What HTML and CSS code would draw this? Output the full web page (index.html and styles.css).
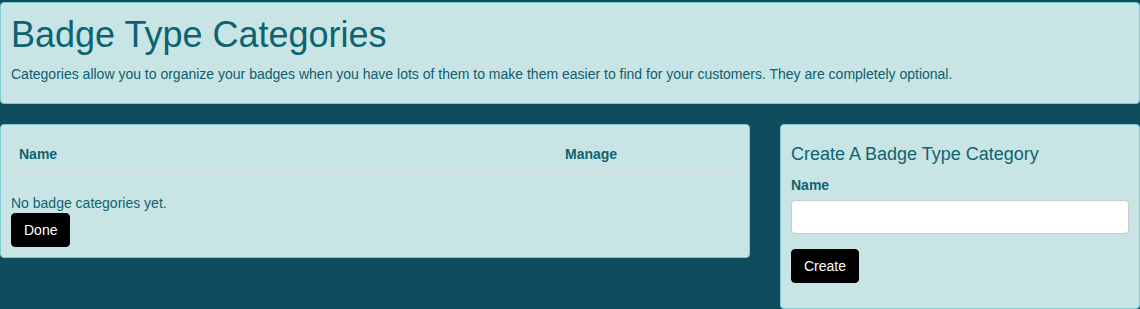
FILE: index.html
```html
<!DOCTYPE html>
<html>
<head>
<meta charset="utf-8">
<link rel="stylesheet" href="styles.css">
</head>
<body>
<div class="page">
  <section class="panel intro">
    <h1 class="title">Badge Type Categories</h1>
    <p class="lead">Categories allow you to organize your badges when you have lots of them to make them easier to find for your customers. They are completely optional.</p>
  </section>
  <div class="columns">
    <section class="panel list">
      <table class="table">
        <thead>
          <tr><th class="col-name">Name</th><th class="col-manage">Manage</th></tr>
        </thead>
      </table>
      <p class="empty">No badge categories yet.</p>
      <button class="btn">Done</button>
    </section>
    <section class="panel create">
      <h3 class="subtitle">Create A Badge Type Category</h3>
      <label class="label" for="name">Name</label>
      <input class="input" id="name" type="text">
      <button class="btn">Create</button>
    </section>
  </div>
</div>
</body>
</html>
```
FILE: styles.css
```css
html, body {
  margin: 0;
  padding: 0;
  background: #0e4c5e;
  height: 100%;
}
body {
  font-family: "Liberation Sans", Arial, sans-serif;
  font-size: 14px;
  color: #0e6470;
}
.page {
  padding-top: 2px;
}
.panel {
  background: #c9e4e5;
  border: 1px solid #7fcbd0;
  border-radius: 4px;
  box-sizing: border-box;
}
.intro {
  padding: 0 10px 10px;
  height: 102px;
}
.title {
  margin: 12px 0 0;
  font-size: 36px;
  font-weight: 500;
  line-height: 1.1;
  color: #0b6470;
}
.lead {
  margin: 9px 0 0;
  line-height: 20px;
  color: #0e5f6c;
}
.columns {
  display: grid;
  grid-template-columns: 750px 360px;
  column-gap: 30px;
  margin-top: 20px;
  align-items: start;
}
.list {
  padding: 0 10px 10px;
  height: 134px;
}
.table {
  width: 100%;
  border-collapse: collapse;
  margin-top: 10px;
}
.table th {
  text-align: left;
  font-weight: bold;
  padding: 8px 8px;
  line-height: 20px;
  border-bottom: 2px solid #dddddd;
  height: 21px;
}
.col-name { width: 530px; }
.empty {
  margin: 19px 0 0;
  line-height: 20px;
}
.btn {
  display: block;
  background: #000;
  color: #fff;
  border: 1px solid #000;
  border-radius: 4px;
  font-family: "Liberation Sans", Arial, sans-serif;
  font-size: 14px;
  line-height: 20px;
  padding: 6px 12px;
  cursor: pointer;
}
.create {
  padding: 10px 10px 24px;
  height: 185px;
}
.subtitle {
  margin: 10px 0 0;
  font-size: 18px;
  font-weight: 500;
  line-height: 1.1;
  color: #0e6470;
}
.label {
  display: block;
  font-weight: bold;
  margin: 10px 0 5px;
  line-height: 20px;
}
.input {
  display: block;
  width: 100%;
  box-sizing: border-box;
  height: 34px;
  border: 1px solid #cccccc;
  border-radius: 4px;
  background: #fff;
  padding: 6px 12px;
  font-size: 14px;
  margin-bottom: 15px;
}
```
